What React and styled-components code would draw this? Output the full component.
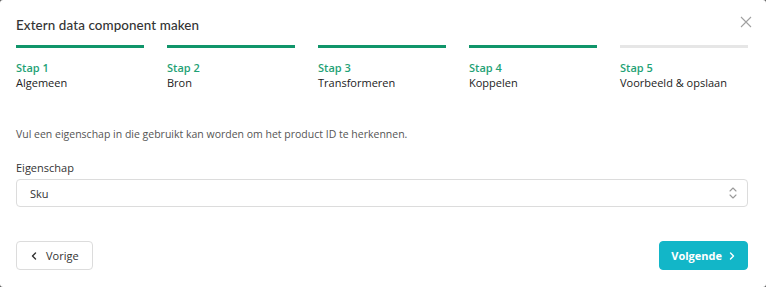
import React, { useState } from 'react';
import styled, { createGlobalStyle } from 'styled-components';

const GlobalStyle = createGlobalStyle`
  html, body {
    margin: 0;
    padding: 0;
    background: #5a5a5a;
  }
  * {
    box-sizing: border-box;
  }
`;

const Modal = styled.div`
  width: 766px;
  height: 287px;
  background: #fff;
  border-radius: 3px;
  padding: 16px 18px 17px 16px;
  display: flex;
  flex-direction: column;
  font-family: "Open Sans", "Noto Sans", sans-serif;
  color: #333;
`;

const Header = styled.div`
  display: flex;
  align-items: center;
  justify-content: space-between;
  height: 18px;
`;

const Title = styled.h1`
  margin: 0;
  font-family: Lato, "Open Sans", sans-serif;
  font-size: 13.4px;
  font-weight: 500;
  color: #333;
  letter-spacing: 0.1px;
`;

const CloseButton = styled.button`
  border: none;
  background: none;
  padding: 0;
  width: 14px;
  height: 14px;
  margin-right: -5px;
  margin-top: -7px;
  display: flex;
  cursor: pointer;
`;

const Steps = styled.div`
  display: grid;
  grid-template-columns: repeat(5, 128px);
  column-gap: 23px;
  margin-top: 11px;
`;

const Step = styled.div`
  display: flex;
  flex-direction: column;
`;

const StepBar = styled.div`
  height: 3px;
  background: ${p => (p.$done ? '#10956a' : '#e6e6e6')};
  margin-bottom: 13px;
`;

const StepNumber = styled.span`
  font-size: 11px;
  font-weight: 600;
  color: #1fa276;
  line-height: 14px;
`;

const StepName = styled.span`
  font-size: 11px;
  color: #222;
  line-height: 14px;
  margin-top: 1px;
`;

const Description = styled.p`
  margin: 37px 0 0;
  font-size: 10.5px;
  color: #555;
  line-height: 14px;
`;

const Field = styled.div`
  display: flex;
  flex-direction: column;
  margin-top: 20px;
  gap: 4px;
`;

const Label = styled.label`
  font-size: 11px;
  color: #333;
  line-height: 14px;
`;

const SelectBox = styled.div`
  height: 28px;
  border: 1px solid #dcdcdc;
  border-radius: 4px;
  display: flex;
  align-items: center;
  justify-content: space-between;
  padding: 0 9px 0 13px;
  font-size: 11px;
  color: #333;
`;

const Footer = styled.div`
  margin-top: auto;
  display: flex;
  justify-content: space-between;
  align-items: center;
`;

const NavButton = styled.button`
  height: 29px;
  border-radius: 4px;
  font-family: "Open Sans", "Noto Sans", sans-serif;
  font-size: 11px;
  display: flex;
  align-items: center;
  gap: ${p => (p.$primary ? '6px' : '8px')};
  cursor: pointer;
  border: 1px solid ${p => (p.$primary ? '#12b6c8' : '#dcdcdc')};
  background: ${p => (p.$primary ? '#12b6c8' : '#fff')};
  color: ${p => (p.$primary ? '#fff' : '#333')};
  font-weight: ${p => (p.$primary ? 700 : 400)};
  padding: ${p => (p.$primary ? '0 11px 0 11px' : '0 13px 0 13px')};
`;

const Chevron = ({ dir }) => (
  <svg width="8" height="8" viewBox="0 0 8 8" fill="none">
    <path
      d={dir === 'left' ? 'M5.5 1 L2.5 4 L5.5 7' : 'M2.5 1 L5.5 4 L2.5 7'}
      stroke="currentColor"
      strokeWidth="1.4"
      strokeLinecap="round"
      strokeLinejoin="round"
    />
  </svg>
);

const UpDown = () => (
  <svg width="10" height="14" viewBox="0 0 10 14" fill="none">
    <path d="M2 5 L5 2 L8 5" stroke="#9a9a9a" strokeWidth="1.1" strokeLinecap="round" strokeLinejoin="round" />
    <path d="M2 9 L5 12 L8 9" stroke="#9a9a9a" strokeWidth="1.1" strokeLinecap="round" strokeLinejoin="round" />
  </svg>
);

const steps = [
  { name: 'Algemeen', done: true },
  { name: 'Bron', done: true },
  { name: 'Transformeren', done: true },
  { name: 'Koppelen', done: true },
  { name: 'Voorbeeld & opslaan', done: false },
];

export default function App() {
  const [value] = useState('Sku');

  return (
    <>
      <GlobalStyle />
      <Modal>
        <Header>
          <Title>Extern data component maken</Title>
          <CloseButton aria-label="Sluiten">
            <svg width="14" height="14" viewBox="0 0 14 14">
              <path d="M2 2 L12 12 M12 2 L2 12" stroke="#a0a0a0" strokeWidth="1.1" />
            </svg>
          </CloseButton>
        </Header>

        <Steps>
          {steps.map((s, i) => (
            <Step key={s.name}>
              <StepBar $done={s.done} />
              <StepNumber>Stap {i + 1}</StepNumber>
              <StepName>{s.name}</StepName>
            </Step>
          ))}
        </Steps>

        <Description>
          Vul een eigenschap in die gebruikt kan worden om het product ID te herkennen.
        </Description>

        <Field>
          <Label>Eigenschap</Label>
          <SelectBox>
            <span>{value}</span>
            <UpDown />
          </SelectBox>
        </Field>

        <Footer>
          <NavButton>
            <Chevron dir="left" />
            Vorige
          </NavButton>
          <NavButton $primary>
            Volgende
            <Chevron dir="right" />
          </NavButton>
        </Footer>
      </Modal>
    </>
  );
}
